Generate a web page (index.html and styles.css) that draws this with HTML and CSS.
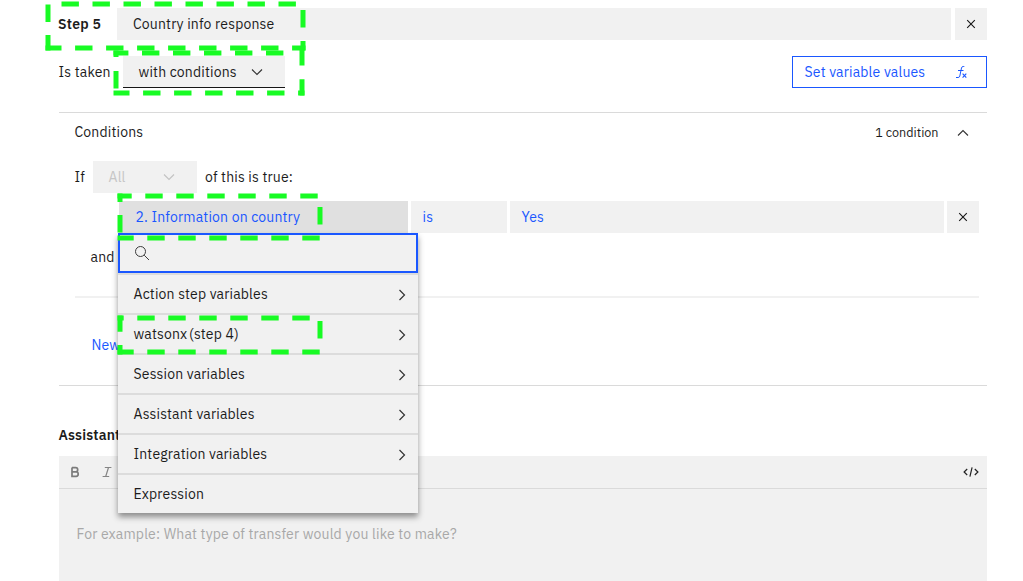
FILE: index.html
```html
<!DOCTYPE html>
<html lang="en">
<head>
<meta charset="utf-8">
<title>Step editor</title>
<link rel="stylesheet" href="styles.css">
</head>
<body>
<main class="editor">
  <header class="step-row">
    <strong class="step-label">Step 5</strong>
    <div class="step-name"><span>Country info response</span></div>
    <button class="icon-button" aria-label="Close"><svg width="16" height="16" viewBox="0 0 16 16"><path d="M4.2 4.2 11.8 11.8M11.8 4.2 4.2 11.8" stroke="#161616" stroke-width="1.1"/></svg></button>
  </header>
  <div class="taken-row">
    <span class="taken-label">Is taken</span>
    <div class="select"><span>with conditions</span><svg width="16" height="16" viewBox="0 0 16 16"><path d="M3 5.5 8 10.5 13 5.5" fill="none" stroke="#333" stroke-width="1.1"/></svg></div>
    <button class="variables-button"><span>Set variable values</span>
      <svg width="16" height="16" viewBox="0 0 16 16" fill="none" stroke="#1a57ff"><path d="M10.3 2.5H9.2Q7.8 2.5 7.5 3.9L5.8 12.1Q5.5 13.5 4.1 13.5H2M4 6.5H9.5" stroke-width="1"/><path d="M8.6 9.6 12.3 13.6M12.3 9.6 8.6 13.6" stroke-width="1.1"/></svg></button>
  </div>
  <section class="conditions">
    <div class="conditions-head"><span>Conditions</span><span class="count">1 condition</span><svg width="16" height="16" viewBox="0 0 16 16"><path d="M3 11.5 8 6.5 13 11.5" fill="none" stroke="#333" stroke-width="1.1"/></svg></div>
    <div class="if-row"><span class="if-label">If</span><div class="all-select"><span>All</span><svg width="16" height="16" viewBox="0 0 16 16"><path d="M3 5.5 8 10.5 13 5.5" fill="none" stroke="#c2c2c2" stroke-width="1.1"/></svg></div><span>of this is true:</span></div>
    <div class="condition-row">
      <div class="cell active"><span>2. Information on country</span></div>
      <div class="cell">is</div>
      <div class="cell">Yes</div>
      <button class="icon-button" aria-label="Remove"><svg width="16" height="16" viewBox="0 0 16 16"><path d="M4.2 4.2 11.8 11.8M11.8 4.2 4.2 11.8" stroke="#161616" stroke-width="1.1"/></svg></button>
    </div>
    <div class="and-row">and</div>
    <div class="new-row">New</div>
  </section>
  <h2 class="says">Assistant</h2>
  <section class="message">
    <div class="toolbar">
      <svg width="16" height="16" viewBox="0 0 16 16"><path d="M5 3.6V12.4H9.2Q11.2 12.4 11.2 10.1T9.2 7.8H5M5 3.6H8.7Q10.7 3.6 10.7 5.7T8.7 7.8" fill="none" stroke="#7c7c7c" stroke-width="1.7"/></svg>
      <svg width="16" height="16" viewBox="0 0 16 16"><path d="M5.8 3.5H12.4M9.5 3.5 6.7 12.5M3.6 12.5H10.2" fill="none" stroke="#858585" stroke-width="1.2"/></svg>
      <svg class="code" width="16" height="16" viewBox="0 0 16 16"><path d="M4.2 5 1.1 8 4.2 11M11.8 5 14.9 8 11.8 11M9.1 3.3 6.9 12.7" fill="none" stroke="#222" stroke-width="1.2"/></svg>
    </div>
    <p class="placeholder">For example: What type of transfer would you like to make?</p>
  </section>
</main>
<div class="menu">
  <div class="search"><svg width="16" height="16" viewBox="0 0 16 16" fill="none" stroke="#3c3c3c"><circle cx="6.5" cy="6.5" r="5" /><path d="M10.2 10.2 15 15"/></svg></div>
  <div class="item"><span>Action step variables</span><svg width="16" height="16" viewBox="0 0 16 16"><path d="M5.5 4 10.5 9 5.5 14"/></svg></div>
  <div class="item"><span><span class="tight">watsonx </span>(step 4)</span><svg width="16" height="16" viewBox="0 0 16 16"><path d="M5.5 4 10.5 9 5.5 14"/></svg></div>
  <div class="item"><span>Session variables</span><svg width="16" height="16" viewBox="0 0 16 16"><path d="M5.5 4 10.5 9 5.5 14"/></svg></div>
  <div class="item"><span>Assistant variables</span><svg width="16" height="16" viewBox="0 0 16 16"><path d="M5.5 4 10.5 9 5.5 14"/></svg></div>
  <div class="item"><span>Integration variables</span><svg width="16" height="16" viewBox="0 0 16 16"><path d="M5.5 4 10.5 9 5.5 14"/></svg></div>
  <div class="item"><span>Expression</span></div>
</div>
<svg class="highlights" width="1023" height="581" viewBox="0 0 1023 581" fill="none" stroke="#18fb24" stroke-width="5" stroke-dasharray="17.4 13.6">
  <path d="M61.5 4H297"/><path d="M48 4.5V22M48 35V50.5M303 10V27.4M303 41V50.5" stroke-dasharray="none"/><path d="M45.5 48H305.5" stroke-dashoffset="1.4"/>
  <path d="M113.5 53H284" stroke-dashoffset="2.5"/><path d="M116 50.5V57M116 71V88.4M302 48V65.4M302 79.3V95.5" stroke-dasharray="none"/><path d="M113.5 93H304.5" stroke-dashoffset="1.4"/>
  <path d="M117.5 196H318" stroke-dashoffset="3.2"/><path d="M120 193.5V202M120 215V232.4M320 207V224.5" stroke-dasharray="none"/><path d="M117.5 238H320" stroke-dashoffset="1.2"/>
  <path d="M117.5 318H311" stroke-dashoffset="11.2"/><path d="M120 315.5V331.7M120 345V354.5M320 321V338.6" stroke-dasharray="none"/><path d="M117.5 352H320" stroke-dashoffset="1.2"/>
</svg>
</body>
</html>
```
FILE: styles.css
```css
* { box-sizing: border-box; }
body { margin: 0; width: 1023px; height: 581px; overflow: hidden; background: #fff; color: #1c1c1c; font: 14px/20px "IBM Plex Sans", Roboto, "Noto Sans", sans-serif; letter-spacing: .16px; }
button { font: inherit; letter-spacing: inherit; border: 0; padding: 0; }
svg { display: block; flex-shrink: 0; }
span { white-space: nowrap; }
.editor { padding: 8px 36px 0 59px; }
.step-row, .taken-row { display: flex; align-items: center; height: 32px; }
.step-label { width: 58px; font-weight: 600; margin-left: -1px; margin-right: 1px; letter-spacing: .25px; }
.step-name { width: 834px; height: 32px; padding: 6px 16px; background: #f1f1f1; }
.icon-button { display: flex; align-items: center; justify-content: center; width: 32px; height: 32px; background: #f1f1f1; }
.step-row .icon-button { margin-left: auto; }
.taken-row { margin-top: 16px; }
.taken-label { width: 64.5px; margin-left: -.5px; }
.select { display: flex; align-items: center; justify-content: space-between; width: 162px; height: 32px; padding: 0 20px 0 15.5px; background: #f1f1f1; border-bottom: 1px solid #161616; }
.variables-button { display: flex; align-items: center; justify-content: space-between; margin-left: auto; width: 195px; height: 32px; padding: 0 16px 0 11.5px; border: 1px solid #1a57ff; background: #fff; color: #1a57ff; }
.conditions { margin-top: 24px; height: 274px; padding: 0 8px 0 15.5px; border-top: 1px solid #dadada; border-bottom: 1px solid #dadada; }
.conditions-head { display: flex; align-items: center; height: 38px; margin-bottom: 10px; padding-right: 8px; }
.count { margin-left: auto; margin-right: 16.5px; font-size: 12.6px; letter-spacing: 0; }
.if-row { display: flex; align-items: center; height: 32px; }
.if-label { width: 18.5px; }
.all-select { display: flex; align-items: center; justify-content: space-between; width: 104px; height: 32px; margin-right: 8px; padding: 0 20px 0 15.5px; background: #f1f1f1; color: #c6c6c6; }
.condition-row { display: grid; grid-template-columns: 289px 96px 434px 32px; gap: 3px; margin: 8px 0 0 44.5px; }
.cell { height: 32px; padding: 6px 11.5px; background: #f1f1f1; color: #1a57ff; }
.active { padding-left: 16.5px; background: #e0e0e0; }
.and-row { height: 65px; padding: 14px 0 0 16px; border-bottom: 2px solid #f1f1f1; }
.new-row { padding: 37px 0 0 17px; color: #1a57ff; }
.says { margin: 39px 0 0 -.5px; font-size: 14px; line-height: 20px; font-weight: 600; }
.message { margin-top: 11px; height: 125px; background: #f1f1f1; }
.toolbar { display: flex; align-items: center; gap: 16px; height: 33px; padding: 0 8px; border-bottom: 1px solid #dadada; }
.code { margin-left: auto; }
.placeholder { margin: 0; padding: 35px 17.5px; color: #a8a8a8; }
.menu { position: absolute; left: 118px; top: 233px; width: 300px; height: 280px; background: #f1f1f1; box-shadow: 0 4px 6px rgba(0,0,0,.42); }
.search { height: 40px; border: 2px solid #1a57ff; padding: 10px 14px; }
.item { display: flex; align-items: center; justify-content: space-between; height: 40px; padding: 0 8px 0 15.5px; border-top: 2px solid #dcdcdc; }
.item path { fill: none; stroke: #333; stroke-width: 1.2; }
.tight { word-spacing: -1.7px; }
.highlights { position: absolute; left: 0; top: 0; }
```
